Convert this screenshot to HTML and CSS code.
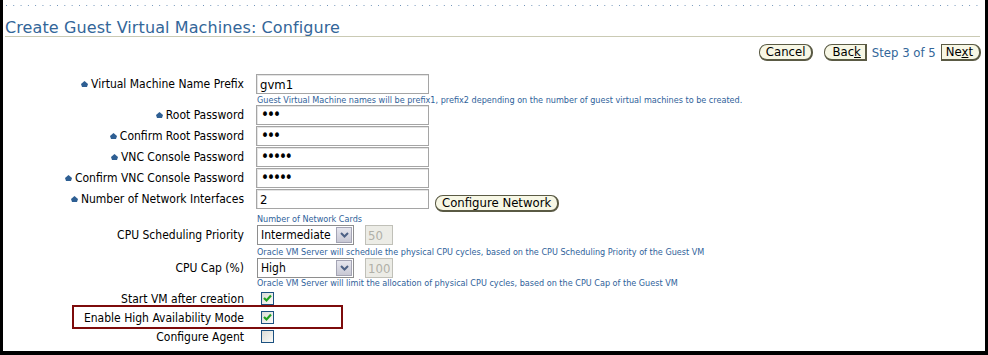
FILE: index.html
```html
<!DOCTYPE html>
<html>
<head>
<meta charset="utf-8">
<link rel="stylesheet" href="styles.css">
</head>
<body>
<div class="frame">
  <div class="dots"></div>
  <h1 class="title">Create Guest Virtual Machines: Configure</h1>
  <div class="actions">
    <button class="btn">Cancel</button>
    <div class="train">
      <button class="btn btn-back">Bac<u>k</u></button>
      <span class="step">Step 3 of 5</span>
      <button class="btn btn-next">Ne<u>x</u>t</button>
    </div>
  </div>

  <div class="form">
    <div class="label req h21"><span class="star"><svg width="7" height="6" viewBox="0 0 7 6"><path d="M3.5 0 L7 3 L6 6 L1 6 L0 3 Z" fill="#2e5f93"/></svg></span>Virtual Machine Name Prefix</div>
    <div class="field h21"><input class="text" type="text" value="gvm1"></div>
    <div class="label h10"></div>
    <div class="hint h10">Guest Virtual Machine names will be prefix1, prefix2 depending on the number of guest virtual machines to be created.</div>

    <div class="label req h21"><span class="star"><svg width="7" height="6" viewBox="0 0 7 6"><path d="M3.5 0 L7 3 L6 6 L1 6 L0 3 Z" fill="#2e5f93"/></svg></span>Root Password</div>
    <div class="field h21"><input class="text pw" type="password" value="abc"></div>

    <div class="label req h21"><span class="star"><svg width="7" height="6" viewBox="0 0 7 6"><path d="M3.5 0 L7 3 L6 6 L1 6 L0 3 Z" fill="#2e5f93"/></svg></span>Confirm Root Password</div>
    <div class="field h21"><input class="text pw" type="password" value="abc"></div>

    <div class="label req h21"><span class="star"><svg width="7" height="6" viewBox="0 0 7 6"><path d="M3.5 0 L7 3 L6 6 L1 6 L0 3 Z" fill="#2e5f93"/></svg></span>VNC Console Password</div>
    <div class="field h21"><input class="text pw" type="password" value="abcde"></div>

    <div class="label req h21"><span class="star"><svg width="7" height="6" viewBox="0 0 7 6"><path d="M3.5 0 L7 3 L6 6 L1 6 L0 3 Z" fill="#2e5f93"/></svg></span>Confirm VNC Console Password</div>
    <div class="field h21"><input class="text pw" type="password" value="abcde"></div>

    <div class="label req h24"><span class="star"><svg width="7" height="6" viewBox="0 0 7 6"><path d="M3.5 0 L7 3 L6 6 L1 6 L0 3 Z" fill="#2e5f93"/></svg></span>Number of Network Interfaces</div>
    <div class="field h24"><input class="text" type="text" value="2"><button class="btn btn-net">Configure Network</button></div>
    <div class="label h12"></div>
    <div class="hint h12">Number of Network Cards</div>

    <div class="label h21">CPU Scheduling Priority</div>
    <div class="field h21">
      <div class="select"><span class="sel-text">Intermediate</span><span class="sel-arrow"><svg width="9" height="6" viewBox="0 0 9 6"><path d="M1 1 L4.5 4.5 L8 1" fill="none" stroke="#4d6185" stroke-width="2"/></svg></span></div>
      <input class="num" type="text" value="50" disabled>
    </div>
    <div class="label h12"></div>
    <div class="hint h12">Oracle VM Server will schedule the physical CPU cycles, based on the CPU Scheduling Priority of the Guest VM</div>

    <div class="label h20">CPU Cap (%)</div>
    <div class="field h20">
      <div class="select"><span class="sel-text">High</span><span class="sel-arrow"><svg width="9" height="6" viewBox="0 0 9 6"><path d="M1 1 L4.5 4.5 L8 1" fill="none" stroke="#4d6185" stroke-width="2"/></svg></span></div>
      <input class="num" type="text" value="100" disabled>
    </div>
    <div class="label h11"></div>
    <div class="hint h11">Oracle VM Server will limit the allocation of physical CPU cycles, based on the CPU Cap of the Guest VM</div>

    <div class="label h19">Start VM after creation</div>
    <div class="field h19"><span class="check on"><svg width="11" height="11" viewBox="0 0 11 11"><path d="M2 5 L4.5 7.5 L9 2.5" fill="none" stroke="#21a121" stroke-width="2.2"/></svg></span></div>

    <div class="label h19">Enable High Availability Mode</div>
    <div class="field h19"><span class="check on"><svg width="11" height="11" viewBox="0 0 11 11"><path d="M2 5 L4.5 7.5 L9 2.5" fill="none" stroke="#21a121" stroke-width="2.2"/></svg></span></div>

    <div class="label h20">Configure Agent</div>
    <div class="field h20"><span class="check"></span></div>
  </div>

  <div class="highlight"></div>
</div>
</body>
</html>
```
FILE: styles.css
```css
html, body {
  margin: 0;
  padding: 0;
  background: #fff;
}
.frame {
  position: relative;
  box-sizing: border-box;
  width: 988px;
  height: 355px;
  border-left: 3px solid #000;
  border-right: 3px solid #000;
  border-bottom: 4px solid #000;
  font-family: "DejaVu Sans Condensed", "DejaVu Sans", sans-serif;
  color: #000;
  overflow: hidden;
}
.dots {
  margin: 5px 5px 0 3px;
  height: 1px;
  background-image: linear-gradient(to right, #6a8fb6 1px, transparent 1px);
  background-size: 7.3px 1px;
  background-repeat: repeat-x;
}
.title {
  box-sizing: border-box;
  margin: 11px 5px 0 2px;
  height: 20px;
  padding-top: 2px;
  font-family: "DejaVu Sans", sans-serif;
  font-size: 16px;
  font-weight: normal;
  line-height: 18px;
  letter-spacing: 0.1px;
  color: #336699;
  border-bottom: 1px solid #cacab4;
}
.actions {
  display: flex;
  justify-content: flex-end;
  align-items: center;
  gap: 11px;
  margin: 7px 4px 0 0;
  height: 17px;
}
.train {
  display: flex;
  align-items: center;
  gap: 5px;
}
.step {
  font-size: 13px;
  color: #336699;
}
.btn {
  box-sizing: border-box;
  height: 17px;
  padding: 0 6px;
  font-family: inherit;
  font-size: 13px;
  line-height: 14px;
  color: #000;
  background: #f7f7e5;
  border: 1px solid #5a5a44;
  border-right-width: 2px;
  border-bottom-width: 2px;
  border-radius: 8px;
}
.btn-back {
  border-radius: 8px 0 0 8px;
  padding: 0 4px 0 7px;
}
.btn-next {
  border-radius: 0 8px 8px 0;
  padding: 0 6px 0 4px;
}
.btn u { text-decoration: underline; }

.form {
  display: grid;
  grid-template-columns: 241px 1fr;
  column-gap: 12px;
  margin-top: 13px;
}
.label {
  display: flex;
  justify-content: flex-end;
  align-items: flex-start;
  font-size: 12px;
  line-height: 20px;
  white-space: nowrap;
}
.star {
  display: inline-flex;
  margin-right: 3px;
  height: 20px;
  align-items: center;
}
.field {
  display: flex;
  align-items: flex-start;
}
.h10 { height: 10px; }
.h11 { height: 11px; }
.h12 { height: 12px; }
.h19 { height: 19px; }
.h20 { height: 20px; }
.h21 { height: 21px; }
.h24 { height: 24px; }
.hint {
  font-size: 9px;
  line-height: 10px;
  color: #2f629a;
  white-space: nowrap;
  padding-left: 1px;
}
.h12.hint { line-height: 12px; }
.text {
  box-sizing: border-box;
  width: 173px;
  height: 20px;
  margin: 0;
  padding: 0 3px;
  font-family: inherit;
  font-size: 13px;
  color: #000;
  border: 1px solid #a5a5a5;
  box-shadow: inset 1px 1px 0 #e4e4e4;
  outline: none;
}
.pw { font-size: 15px; letter-spacing: -2px; padding-left: 4px; }
.btn-net {
  margin: 6px 0 0 6px;
  padding: 0 6px;
}
.select {
  box-sizing: border-box;
  display: flex;
  align-items: center;
  width: 97px;
  height: 20px;
  margin-left: 1px;
  border: 1px solid #8e8e8e;
  background: #fff;
}
.sel-text {
  flex: 1;
  padding-left: 3px;
  font-size: 12px;
}
.sel-arrow {
  box-sizing: border-box;
  display: flex;
  align-items: center;
  justify-content: center;
  width: 16px;
  height: 16px;
  margin-right: 1px;
  background: linear-gradient(#e6e6ee, #c8c8d4);
  border: 1px solid #a4a4b4;
}
.num {
  box-sizing: border-box;
  width: 28px;
  height: 20px;
  margin: 0 0 0 11px;
  padding: 0 2px;
  font-family: inherit;
  font-size: 13px;
  color: #b0b0a8;
  background: #ecece6;
  border: 1px solid #c0c0b8;
}
.check {
  box-sizing: border-box;
  display: flex;
  align-items: center;
  justify-content: center;
  width: 13px;
  height: 13px;
  margin: 3px 0 0 5px;
  border: 1px solid #1c5180;
  background: linear-gradient(135deg, #dcdcd6, #fbfbf9);
}
.highlight {
  position: absolute;
  left: 69px;
  top: 305px;
  width: 271px;
  height: 24px;
  box-sizing: border-box;
  border: 2px solid #7d0b0b;
  pointer-events: none;
}
```
